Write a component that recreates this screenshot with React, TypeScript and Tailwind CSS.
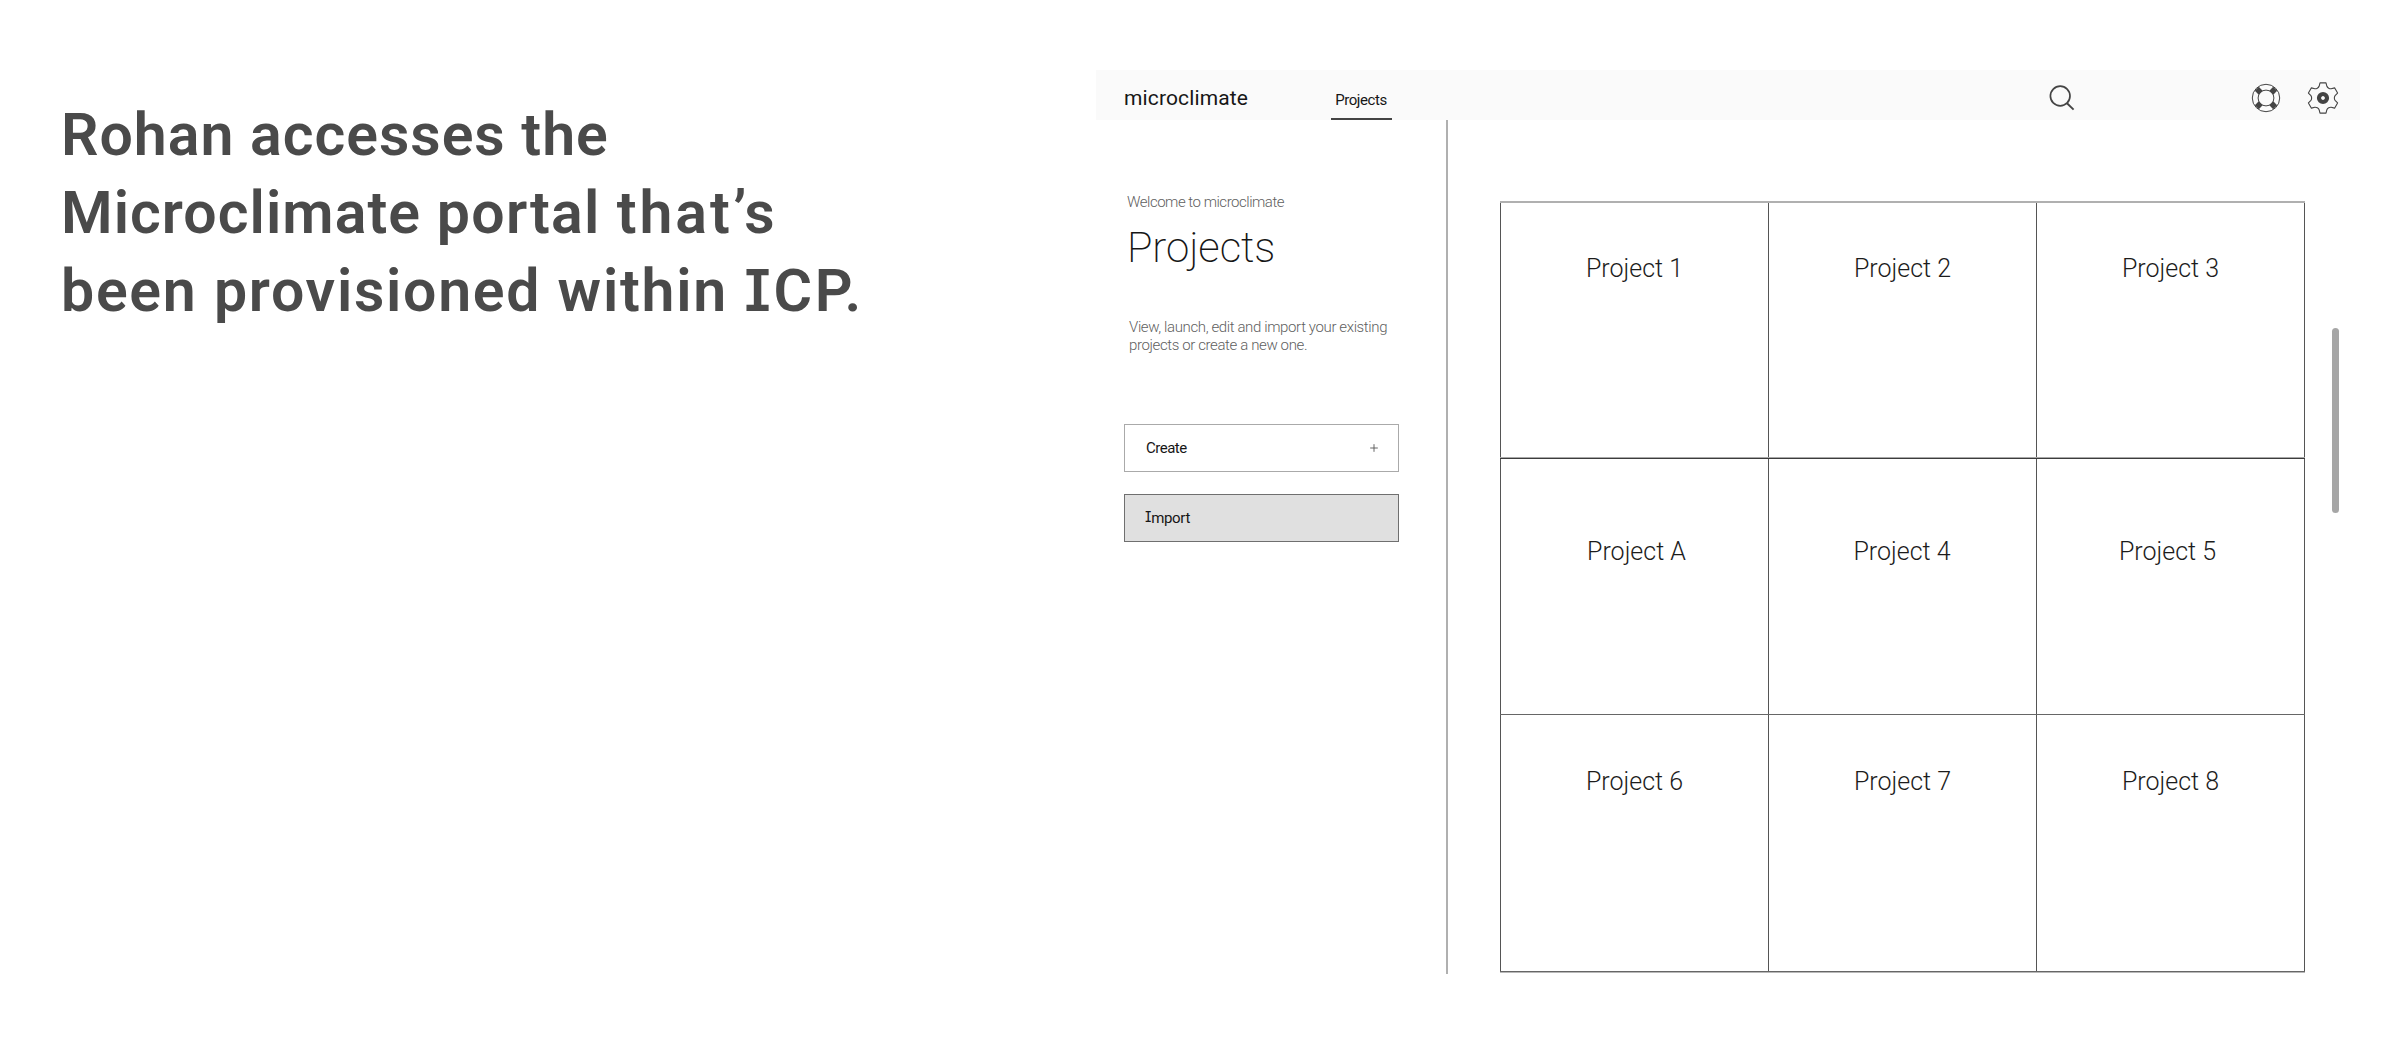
import type { ReactNode } from "react";

// Capital I with slab serifs.
function SlabI() {
  return <span className="font-['Inter',sans-serif] [font-feature-settings:'cv08'] text-[0.97em]">I</span>;
}

function SearchIcon() {
  return (
    <svg width="26" height="26" viewBox="0 0 26 26" fill="none" stroke="#444" strokeWidth="1.7">
      <circle cx="11.2" cy="11" r="9.8" />
      <path d="M18 18.2 24.6 24.6" strokeWidth="1.9" />
    </svg>
  );
}

function LifebuoyIcon() {
  return (
    <svg width="30" height="30" viewBox="-15 -15 30 30" fill="none" stroke="#444">
      <circle r="13.7" strokeWidth="1" />
      <circle r="7.9" strokeWidth="1" />
      <path
        d="M-5.3-5.3-9.2-9.2M5.3-5.3 9.2-9.2M-5.3 5.3-9.2 9.2M5.3 5.3 9.2 9.2"
        strokeWidth="5.6"
      />
    </svg>
  );
}

function rotate(x: number, y: number, deg: number) {
  const a = (deg * Math.PI) / 180;
  const c = Math.cos(a);
  const s = Math.sin(a);
  return `${(x * c - y * s).toFixed(2)} ${(x * s + y * c).toFixed(2)}`;
}

// Six tapered teeth joined by shallow concave valleys.
const gearOutline =
  [0, 60, 120, 180, 240, 300]
    .map(
      (d) =>
        `${d === 0 ? "M" : "L"}${rotate(-3, -15.1, d)}L${rotate(3, -15.1, d)}L${rotate(3.9, -11.7, d)}` +
        `C${rotate(4.4, -10.3, d)} ${rotate(-4.4, -10.3, d + 60)} ${rotate(-3.9, -11.7, d + 60)}`
    )
    .join("") + "Z";

function GearIcon() {
  return (
    <svg width="34" height="34" viewBox="-17 -17 34 34" fill="none" stroke="#444">
      <path d={gearOutline} strokeWidth="1.1" strokeLinejoin="round" />
      <circle r="4" strokeWidth="4.2" />
    </svg>
  );
}

function Cell({ children, className }: { children: ReactNode; className: string }) {
  return (
    <div className={`flex justify-center border-l border-[#555] text-[25px] leading-8 font-light text-[#1c1c1c] last:border-r ${className}`}>
      {children}
    </div>
  );
}

function Label({ id }: { id: string }) {
  return <span className="whitespace-nowrap">Project {id}</span>;
}

export default function App() {
  return (
    <div className="flex h-[1046px] w-[2402px] overflow-hidden bg-white font-['Roboto',sans-serif]">
      <section className="w-[1096px] shrink-0 pt-[96px] pl-[61px]">
        <h1 className="flex flex-col text-[59px] leading-[78px] font-semibold whitespace-nowrap text-[#4a4a4a]">
          <span className="tracking-[0.99px]">Rohan accesses the</span>
          <span className="tracking-[1.05px]">
            Microclimate <span className="tracking-[1.3px]">portal </span>
            <span className="tracking-[3px]">that’s</span>
          </span>
          <span className="tracking-[1.72px]">
            been provisioned within <span className="tracking-[2.6px]"><SlabI />CP.</span>
          </span>
        </h1>
      </section>

      <main className="flex w-[1264px] shrink-0 flex-col pt-[70px]">
        <header className="flex h-[50px] shrink-0 items-stretch bg-[#fafafa] text-[#161616]">
          <div className="w-[235px] pt-4 pl-7 text-[21px] leading-6 tracking-[0.13px]">microclimate</div>
          <nav className="flex w-[61px] flex-col items-center border-b-2 border-[#444] pt-5 pr-px text-[15px] leading-5 tracking-[-0.42px]">
            Projects
          </nav>
          <div className="ml-[657px] pt-[15px]">
            <SearchIcon />
          </div>
          <div className="ml-[176px] pt-[13px]">
            <LifebuoyIcon />
          </div>
          <div className="ml-[25px] pt-[11px]">
            <GearIcon />
          </div>
        </header>

        <div className="flex">
          <aside className="flex h-[854px] w-[352px] shrink-0 flex-col border-r-2 border-[#b0b0b0] pt-[72px] pl-7">
            <p className="ml-[3px] text-[15px] leading-5 font-light tracking-[-0.48px] text-[#5f5f5f]">
              Welcome to microclimate
            </p>
            <h2 className="mt-3 ml-[3px] text-[42px] leading-[48px] font-extralight tracking-[-0.1px] text-[#161616]">
              Projects
            </h2>
            <p className="mt-[46px] ml-[5px] flex flex-col text-[15px] leading-[18px] font-light tracking-[-0.38px] whitespace-nowrap text-[#5f5f5f]">
              <span>View, launch, edit and import your existing</span>
              <span>projects or create a new one.</span>
            </p>
            <button className="mt-[70px] flex h-12 w-[275px] items-center justify-between border border-[#aaa] pr-5 pl-[21px] text-[15px] tracking-[-0.5px] text-[#161616]">
              Create
              <svg width="8" height="8" viewBox="0 0 8 8" stroke="#555" strokeWidth="0.9">
                <path d="M4 0.2V7.8M0.2 4H7.8" />
              </svg>
            </button>
            <button className="mt-[22px] flex h-12 w-[275px] items-center border border-[#6f6f6f] bg-[#e0e0e0] pl-5 text-[15px] tracking-[-0.3px] text-[#161616]">
              <SlabI />mport
            </button>
          </aside>

          <div className="mt-[81px] ml-[52px] w-[805px]">
            <div className="grid h-[256px] grid-cols-[268px_268px_269px] border-t-2 border-[#b0b0b0]">
              <Cell className="pt-[50px]"><Label id="1" /></Cell>
              <Cell className="pt-[50px]"><Label id="2" /></Cell>
              <Cell className="pt-[50px]"><Label id="3" /></Cell>
            </div>
            <div className="h-px bg-[#a8a8a8]" />
            <div className="grid h-[256px] grid-cols-[268px_268px_269px] border-t border-[#3c3c3c]">
              <Cell className="pt-[77px] pl-1"><Label id="A" /></Cell>
              <Cell className="pt-[77px] pr-px"><Label id="4" /></Cell>
              <Cell className="pt-[77px] pr-[6px]"><Label id="5" /></Cell>
            </div>
            <div className="grid h-[257px] grid-cols-[268px_268px_269px] border-t border-[#666]">
              <Cell className="pt-[51px]"><Label id="6" /></Cell>
              <Cell className="pt-[51px]"><Label id="7" /></Cell>
              <Cell className="pt-[51px]"><Label id="8" /></Cell>
            </div>
            <div className="h-px bg-[#666]" />
            <div className="h-px bg-[#b8b8b8]" />
          </div>

          <div className="mt-[208px] ml-[27px] h-[185px] w-[7px] rounded-full bg-[#a6a6a6]" />
        </div>
      </main>
    </div>
  );
}
